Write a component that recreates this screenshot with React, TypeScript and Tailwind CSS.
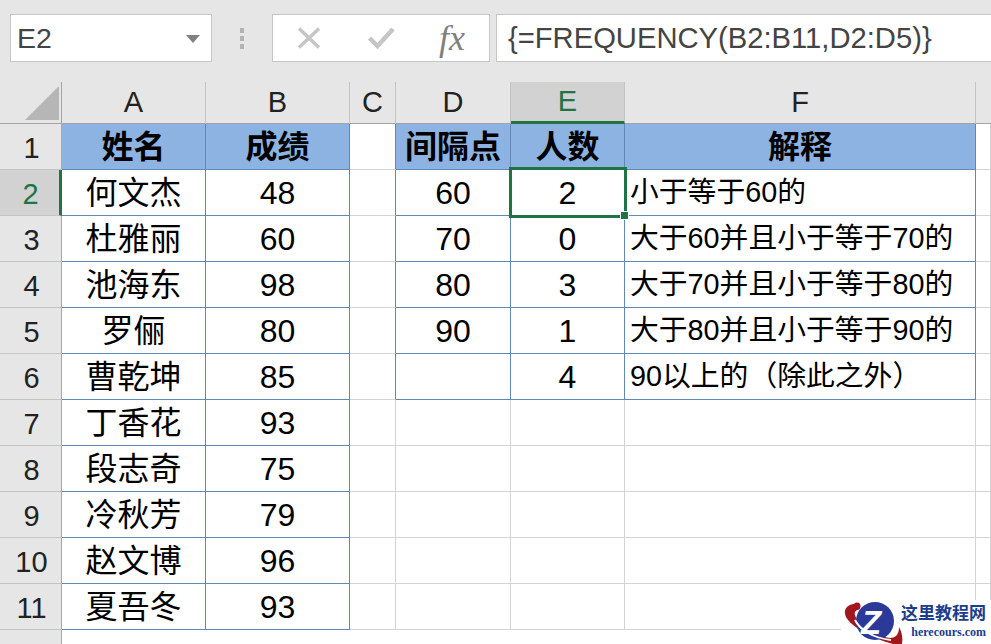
const columns = ["A", "B", "C", "D", "E", "F"];

const people = [
  ["姓名", "成绩"],
  ["何文杰", "48"],
  ["杜雅丽", "60"],
  ["池海东", "98"],
  ["罗俪", "80"],
  ["曹乾坤", "85"],
  ["丁香花", "93"],
  ["段志奇", "75"],
  ["冷秋芳", "79"],
  ["赵文博", "96"],
  ["夏吾冬", "93"],
];

const stats = [
  ["间隔点", "人数", "解释"],
  ["60", "2", "小于等于60的"],
  ["70", "0", "大于60并且小于等于70的"],
  ["80", "3", "大于70并且小于等于80的"],
  ["90", "1", "大于80并且小于等于90的"],
  ["", "4", "90以上的（除此之外）"],
];

function Cell({
  children,
  head,
  right,
  bottom,
  left,
}: {
  children?: React.ReactNode;
  head?: boolean;
  right?: boolean;
  bottom?: boolean;
  left?: boolean;
}) {
  return (
    <div
      className={`flex h-[46px] items-center overflow-hidden whitespace-nowrap border-r border-b ${left ? "justify-start pl-[5px] text-[28.8px]" : "justify-center text-[32px]"} ${head ? "bg-[#8db3e2] font-bold" : "bg-white"} ${right ? "border-r-[#6288b8]" : "border-r-[#d4d4d4]"} ${bottom ? "border-b-[#6288b8]" : "border-b-[#d4d4d4]"}`}
    >
      {children}
    </div>
  );
}

function RowHeader({ n, active }: { n: number; active?: boolean }) {
  return (
    <div
      className={`flex h-[46px] items-center justify-center border-b border-b-[#c4c4c4] border-r text-[29px] pl-[2px] pt-[4px] ${active ? "bg-[#d2d2d2] text-[#217346] border-r-[#217346] border-r-[3px]" : "bg-[#e6e6e6] text-[#222] border-r-[#a4a9b0]"}`}
    >
      {n}
    </div>
  );
}

function Logo() {
  return (
    <div className="absolute right-0 bottom-0 flex h-[44px] w-[150px] items-start bg-white">
      <svg width="62" height="44" viewBox="0 0 62 44" className="shrink-0">
        {/* red orbit behind the globe */}
        <path d="M18 4C8 3 3 8 4 14c2 11 26 24 48 30h9c1-6 0-12-3-17 0 7-3 11-9 11C34 36 16 24 14 15c-1-3 1-5 5-6z" fill="#a3161f" />
        <circle cx="16" cy="6" r="3.5" fill="#a3161f" />
        <circle cx="34" cy="21" r="19" fill="#2b3a98" />
        <path d="M14 20c5 10 18 18 36 20" stroke="#fff" strokeWidth="2" fill="none" />
        <text x="20" y="34" fill="#fff" fontSize="33" fontWeight="700" fontStyle="italic" fontFamily="Liberation Sans, sans-serif">
          Z
        </text>
      </svg>
      <div className="-ml-[2px] flex w-[85px] flex-col items-end whitespace-nowrap pt-[5px] [font-family:'Liberation_Serif','Noto_Sans_CJK_SC',serif] font-bold leading-none text-[#1c3c8c]">
        <span className="text-[17px]">这里教程网</span>
        <span className="mt-[4px] text-[12px]">herecours.com</span>
      </div>
    </div>
  );
}

export default function App() {
  const rows = Array.from({ length: 11 }, (_, i) => i);
  return (
    <div className="relative h-[644px] w-[991px] overflow-hidden bg-white text-black [font-family:'Liberation_Sans','Noto_Sans_CJK_SC',sans-serif]">
      {/* formula bar */}
      <div className="flex h-[82px] items-start bg-[#e6e6e6] pt-[14px] pl-[10px]">
        <div className="flex h-[48px] w-[202px] items-center justify-between border border-[#c6c6c6] bg-white pl-[6px] pr-[11px] pt-[1px] text-[28.5px] text-[#444]">
          E2
          <svg width="14" height="8" viewBox="0 0 14 8">
            <path d="M0 0h14L7 8z" fill="#808080" />
          </svg>
        </div>
        <div className="flex h-[48px] w-[60px] flex-col items-center justify-center gap-[3px]">
          <span className="h-[5px] w-[4px] bg-[#b2b2b2]" />
          <span className="h-[5px] w-[4px] bg-[#b2b2b2]" />
          <span className="h-[5px] w-[4px] bg-[#b2b2b2]" />
        </div>
        <div className="flex h-[48px] w-[218px] items-center border border-[#c6c6c6] bg-white">
          <svg width="24" height="22" viewBox="0 0 24 22" className="ml-[24px]">
            <path d="M2 1.5l20 19M22 1.5l-20 19" stroke="#c6c6c6" strokeWidth="3.5" fill="none" />
          </svg>
          <svg width="27" height="22" viewBox="0 0 27 22" className="ml-[47px]">
            <path d="M1.5 11l8 8L25 2" stroke="#c6c6c6" strokeWidth="4.5" fill="none" />
          </svg>
          <span className="ml-[44px] text-[36px] italic text-[#808080] [font-family:'Liberation_Serif',serif]">fx</span>
        </div>
        <div className="ml-[6px] flex h-[48px] flex-1 items-center border border-r-0 border-[#c6c6c6] bg-white pl-[11px] pt-[1px] text-[29.2px] text-[#444]">
          {"{=FREQUENCY(B2:B11,D2:D5)}"}
        </div>
      </div>

      {/* sheet */}
      <div className="grid grid-cols-[62px_144px_144px_46px_115px_114px_351px_1fr]">
        <div className="flex h-[42px] items-end justify-end border-r border-b border-[#a4a4a4] bg-[#e6e6e6] pb-[3px] pr-[2px]">
          <svg width="34" height="34" viewBox="0 0 34 34">
            <path d="M34 0v34H0z" fill="#b6b6b6" />
          </svg>
        </div>
        {columns.map((c) => (
          <div
            key={c}
            className={`flex h-[42px] items-center justify-center border-r border-r-[#c4c4c4] text-[29px] ${c === "E" ? "border-b-[3px] border-b-[#217346] bg-[#d2d2d2] text-[#217346]" : "border-b border-b-[#a4a4a4] bg-[#e6e6e6] text-[#222]"}`}
          >
            {c}
          </div>
        ))}
        <div className="h-[42px] border-b border-b-[#a4a4a4] bg-[#e6e6e6]" />

        {rows.map((i) => {
          const inStats = i < stats.length;
          return (
            <div key={i} className="contents">
              <RowHeader n={i + 1} active={i === 1} />
              <Cell head={i === 0} right bottom>{people[i][0]}</Cell>
              <Cell head={i === 0} right bottom>{people[i][1]}</Cell>
              <Cell right={inStats} />
              <Cell head={i === 0} right={inStats} bottom={inStats}>{inStats ? stats[i][0] : ""}</Cell>
              <Cell head={i === 0} right={inStats} bottom={inStats}>{inStats ? stats[i][1] : ""}</Cell>
              {i === 0 ? (
                <Cell head right bottom>{stats[i][2]}</Cell>
              ) : (
                <Cell left right={inStats} bottom={inStats}>{inStats ? stats[i][2] : ""}</Cell>
              )}
              <Cell />
            </div>
          );
        })}

        <div className="flex h-[46px] items-center justify-center border-r border-r-[#a4a9b0] bg-[#e6e6e6] pl-[2px] pt-[4px] text-[29px] text-[#222]">12</div>
      </div>

      {/* selected cell E2 */}
      <div className="absolute top-[167px] left-[509px] h-[51px] w-[118px] border-[3px] border-[#217346]">
        <div className="absolute -right-[5px] -bottom-[5px] h-[9px] w-[9px] border border-white bg-[#217346]" />
      </div>

      <Logo />
    </div>
  );
}
